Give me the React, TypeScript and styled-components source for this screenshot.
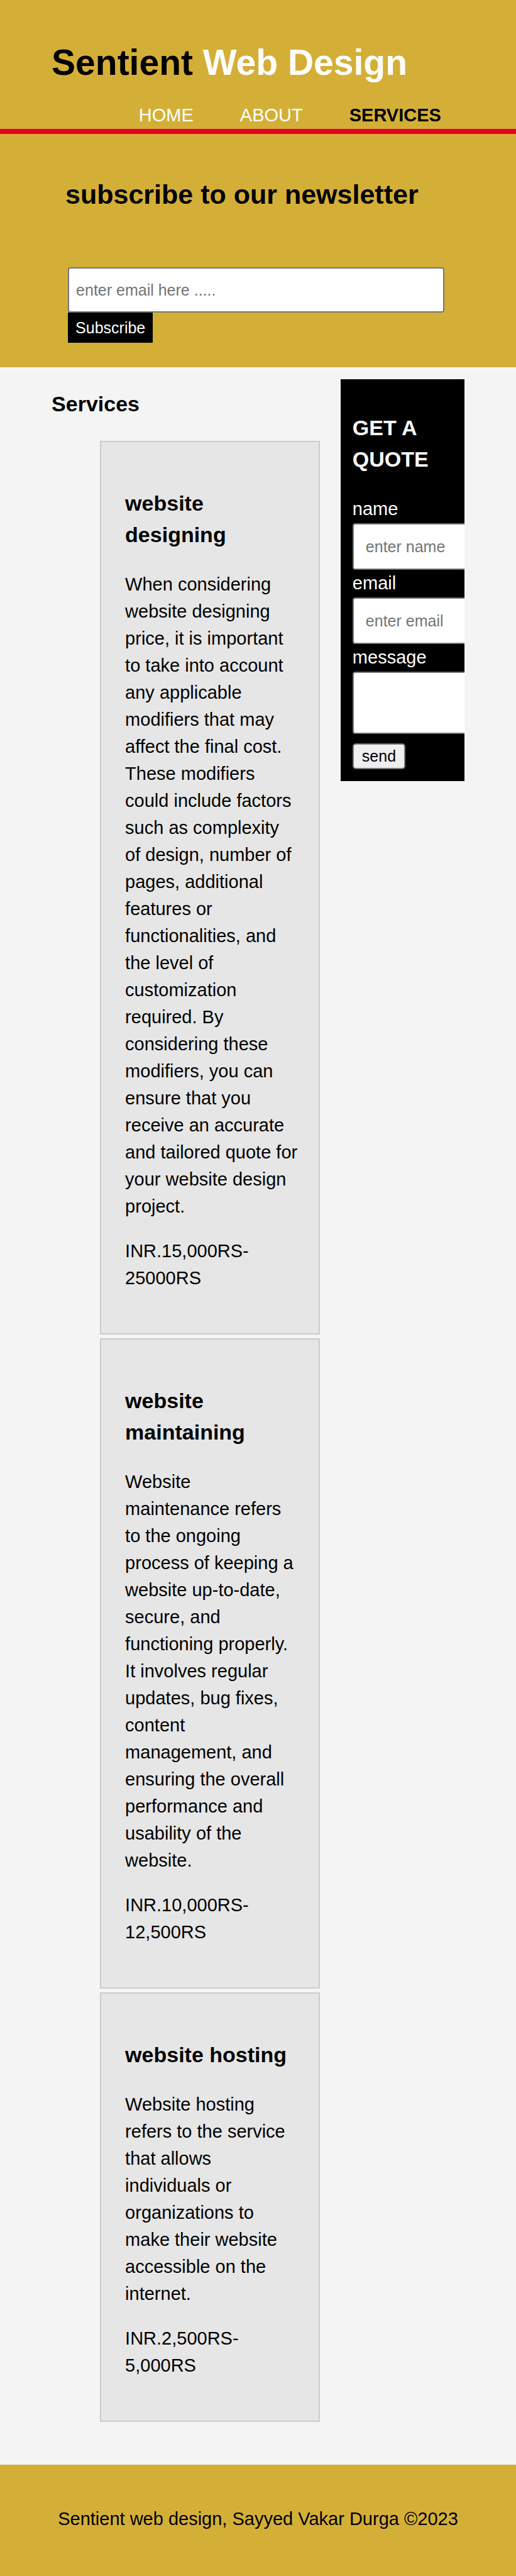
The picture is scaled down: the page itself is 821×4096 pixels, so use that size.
import React from "react";
import styled, { createGlobalStyle } from "styled-components";

const GlobalStyle = createGlobalStyle`
  *, *::before, *::after { box-sizing: border-box; }
  body {
    margin: 0;
    background: #f4f4f4;
    color: #000;
    font-family: "Liberation Sans", Arial, Helvetica, sans-serif;
    font-size: 29px;
    line-height: 43px;
  }
`;

const Container = styled.div`
  width: 80%;
  margin: 0 auto;
`;

const Header = styled.header`
  background: #d4af37;
  padding-top: 56px;
  border-bottom: 8px solid #e60023;
`;

const Brand = styled.h1`
  margin: 0 0 20px;
  font-size: 57px;
  line-height: 86px;
  white-space: nowrap;
`;

const Highlight = styled.span`
  color: #fff;
`;

const Nav = styled.nav`
  display: flex;
  justify-content: flex-end;
`;

const NavLink = styled.a<{ $current?: boolean }>`
  padding: 0 37px;
  color: ${(p) => (p.$current ? "#000" : "#fff")};
  font-weight: ${(p) => (p.$current ? 700 : 400)};
  text-decoration: none;
  text-transform: uppercase;
`;

const Newsletter = styled.section`
  background: #d4af37;
  padding: 64px 0 39px;
`;

const NewsletterTitle = styled.h2`
  margin: 0 22px 84px;
  font-size: 43px;
  line-height: 64px;
  white-space: nowrap;
`;

const NewsletterForm = styled.form`
  display: flex;
  flex-direction: column;
  align-items: flex-start;
  padding: 0 32px 0 26px;
`;

const TextInput = styled.input`
  display: block;
  width: 100%;
  height: 72px;
  padding: 0 11px;
  border: 2px solid #767676;
  border-radius: 4px;
  background: #fff;
  font: 25px "Liberation Sans", Arial, sans-serif;

  &::placeholder {
    color: #757575;
    opacity: 1;
  }
`;

const SubscribeButton = styled.button`
  height: 48px;
  padding: 0 12px;
  border: 0;
  background: #000;
  color: #fff;
  font: 25px "Liberation Sans", Arial, sans-serif;
`;

const Main = styled(Container)`
  display: flex;
  justify-content: space-between;
  align-items: flex-start;
  padding-bottom: 68px;
`;

const Article = styled.article`
  width: 65%;
`;

const Heading = styled.h2`
  margin: 33px 0 34px;
  font-size: 34px;
  line-height: 50px;
`;

const ServiceList = styled.ul`
  display: flex;
  flex-direction: column;
  gap: 6px;
  margin: 0;
  padding: 0 0 0 77px;
  list-style: none;
`;

const ServiceCard = styled.li`
  padding: 38px 31px 38px 38px;
  border: 2px solid #ccc;
  background: #e6e6e6;
`;

const CardTitle = styled.h3`
  margin: 34px 0 33px;
  font-size: 34px;
  line-height: 50px;
`;

const CardText = styled.p`
  margin: 0 0 28px;
`;

const Quote = styled.aside`
  width: 30%;
  margin-top: 19px;
  padding: 19px;
  overflow: hidden;
  background: #000;
  color: #fff;
`;

const QuoteTitle = styled.h3`
  margin: 33px 0;
  font-size: 34px;
  line-height: 50px;
`;

const FieldLabel = styled.label`
  display: block;
  margin-bottom: 1px;
`;

const QuoteInput = styled(TextInput)`
  width: 320px;
  height: 74px;
  padding: 0 19px;
`;

const QuoteMessage = styled.textarea`
  display: block;
  width: 320px;
  height: 99px;
  padding: 19px;
  border: 2px solid #767676;
  border-radius: 4px;
  background: #fff;
  font: 25px "Liberation Sans", Arial, sans-serif;
  resize: none;
`;

const SendButton = styled.button`
  display: block;
  height: 41px;
  margin-top: 15px;
  padding: 0 13px;
  border: 2px solid #767676;
  border-radius: 5px;
  background: #efefef;
  color: #000;
  font: 25px "Liberation Sans", Arial, sans-serif;
`;

const Footer = styled.footer`
  padding: 65px 0 69px;
  background: #d4af37;
  text-align: center;
`;

const services = [
  {
    title: "website designing",
    text: "When considering website designing price, it is important to take into account any applicable modifiers that may affect the final cost. These modifiers could include factors such as complexity of design, number of pages, additional features or functionalities, and the level of customization required. By considering these modifiers, you can ensure that you receive an accurate and tailored quote for your website design project.",
    price: "INR.15,000RS-25000RS",
  },
  {
    title: "website maintaining",
    text: "Website maintenance refers to the ongoing process of keeping a website up-to-date, secure, and functioning properly. It involves regular updates, bug fixes, content management, and ensuring the overall performance and usability of the website.",
    price: "INR.10,000RS-12,500RS",
  },
  {
    title: "website hosting",
    text: "Website hosting refers to the service that allows individuals or organizations to make their website accessible on the internet.",
    price: "INR.2,500RS-5,000RS",
  },
];

export default function App() {
  return (
    <>
      <GlobalStyle />
      <Header>
        <Container>
          <Brand>
            Sentient <Highlight>Web Design</Highlight>
          </Brand>
          <Nav>
            <NavLink href="#home">Home</NavLink>
            <NavLink href="#about">About</NavLink>
            <NavLink href="#services" $current aria-current="page">
              Services
            </NavLink>
          </Nav>
        </Container>
      </Header>

      <Newsletter>
        <Container>
          <NewsletterTitle>subscribe to our newsletter</NewsletterTitle>
          <NewsletterForm onSubmit={(e) => e.preventDefault()}>
            <TextInput type="email" placeholder="enter email here ....." aria-label="email address" />
            <SubscribeButton type="submit">Subscribe</SubscribeButton>
          </NewsletterForm>
        </Container>
      </Newsletter>

      <Main as="main">
        <Article id="services">
          <Heading>Services</Heading>
          <ServiceList>
            {services.map((s) => (
              <ServiceCard key={s.title}>
                <CardTitle>{s.title}</CardTitle>
                <CardText>{s.text}</CardText>
                <CardText>{s.price}</CardText>
              </ServiceCard>
            ))}
          </ServiceList>
        </Article>

        <Quote>
          <QuoteTitle>GET A QUOTE</QuoteTitle>
          <form onSubmit={(e) => e.preventDefault()}>
            <FieldLabel htmlFor="quote-name">name</FieldLabel>
            <QuoteInput id="quote-name" type="text" placeholder="enter name" />
            <FieldLabel htmlFor="quote-email">email</FieldLabel>
            <QuoteInput id="quote-email" type="email" placeholder="enter email" />
            <FieldLabel htmlFor="quote-message">message</FieldLabel>
            <QuoteMessage id="quote-message" />
            <SendButton type="submit">send</SendButton>
          </form>
        </Quote>
      </Main>

      <Footer>Sentient web design, Sayyed Vakar Durga ©2023</Footer>
    </>
  );
}
